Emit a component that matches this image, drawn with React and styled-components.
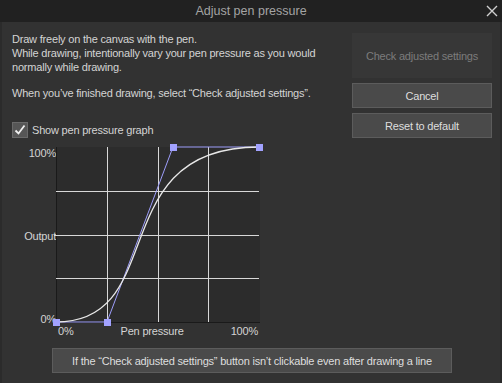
import React from 'react';
import styled, { createGlobalStyle } from 'styled-components';

const GlobalStyle = createGlobalStyle`
  html, body {
    margin: 0;
    padding: 0;
    background: #2b2b2b;
  }
  body {
    font-family: 'Liberation Sans', Arial, sans-serif;
    font-size: 11px;
    letter-spacing: -0.2px;
  }
`;

const Window = styled.div`
  width: 502px;
  height: 383px;
  display: flex;
  flex-direction: column;
  background: #2b2b2b;
  overflow: hidden;
`;

const TitleBar = styled.div`
  height: 22px;
  flex: none;
  display: flex;
  align-items: center;
  justify-content: center;
  position: relative;
  background: #212121;
  color: #a4a4a4;
  font-size: 12.5px;
  letter-spacing: 0;
`;

const CloseButton = styled.div`
  position: absolute;
  right: 4px;
  top: 5px;
  width: 12px;
  height: 12px;
`;

const Body = styled.div`
  flex: 1;
  margin: 0 2px;
  background: #323232;
  padding: 10px 8px 0 10px;
  display: flex;
  flex-direction: column;
`;

const Columns = styled.div`
  display: grid;
  grid-template-columns: 1fr 140px;
  column-gap: 10px;
`;

const Left = styled.div`
  display: flex;
  flex-direction: column;
`;

const Para = styled.p`
  margin: ${p => p.$top || 0}px 0 0;
  color: #d4d4d4;
  line-height: 14px;
`;

const CheckRow = styled.label`
  display: flex;
  align-items: center;
  gap: 4px;
  margin-top: 22px;
  color: #d4d4d4;
`;

const Box = styled.span`
  width: 16px;
  height: 16px;
  box-sizing: border-box;
  background: #565656;
  border: 1px solid #6a6a6a;
  display: flex;
  align-items: center;
  justify-content: center;
`;

const Graph = styled.div`
  margin-top: 9px;
  display: grid;
  grid-template-columns: 44px 203px;
  grid-template-rows: 176px 14px;
`;

const YLabels = styled.div`
  display: flex;
  flex-direction: column;
  justify-content: space-between;
  align-items: flex-end;
  color: #d4d4d4;
  line-height: 12px;
  margin-bottom: -2px;
`;

const XLabels = styled.div`
  grid-column: 2;
  display: flex;
  justify-content: space-between;
  color: #d4d4d4;
  line-height: 12px;
  padding: 2px 1px 0 2px;
`;

const Plot = styled.svg`
  display: block;
  overflow: visible;
`;

const RightCol = styled.div`
  display: flex;
  flex-direction: column;
  gap: 5px;
  padding-top: 1px;
`;

const Button = styled.div`
  box-sizing: border-box;
  height: ${p => p.$tall ? 45 : 25}px;
  display: flex;
  align-items: center;
  justify-content: center;
  white-space: nowrap;
  background: ${p => p.$disabled ? '#373737' : '#4a4a4a'};
  border: 1px solid ${p => p.$disabled ? '#373737' : '#5c5c5c'};
  color: ${p => p.$disabled ? '#7c7c7c' : '#dedede'};
`;

const Footer = styled.div`
  display: flex;
  justify-content: center;
  margin-top: 11px;
`;

const WideButton = styled(Button)`
  width: 400px;
`;

// plot coords: width 203, height 175
const W = 203;
const H = 175;
const pts = [[0, H], [51, H], [117, 0], [W, 0]];

export default function App() {
  const grid = [];
  for (let i = 1; i < 4; i++) {
    const x = Math.round((W * i) / 4) + 0.5;
    const y = Math.round((H * i) / 4) + 0.5;
    grid.push(<line key={'v' + i} x1={x} y1={0} x2={x} y2={H} stroke="#d8d8d8" strokeWidth="1" />);
    grid.push(<line key={'h' + i} x1={i === 2 ? -2 : 0} y1={y} x2={W} y2={y} stroke="#d8d8d8" strokeWidth="1" />);
  }
  return (
    <Window>
      <GlobalStyle />
      <TitleBar>
        Adjust pen pressure
        <CloseButton>
          <svg width="12" height="12" viewBox="0 0 12 12">
            <path d="M1 1 L11 11 M11 1 L1 11" stroke="#cfcfcf" strokeWidth="1.4" />
          </svg>
        </CloseButton>
      </TitleBar>
      <Body>
        <Columns>
          <Left>
            <Para>Draw freely on the canvas with the pen.</Para>
            <Para>While drawing, intentionally vary your pen pressure as you would normally while drawing.</Para>
            <Para $top={12}>When you’ve finished drawing, select “Check adjusted settings”.</Para>
            <CheckRow>
              <Box>
                <svg width="12" height="12" viewBox="0 0 12 12">
                  <path d="M1.5 6.5 L4.5 9.5 L10.5 1.5" fill="none" stroke="#f0f0f0" strokeWidth="1.8" />
                </svg>
              </Box>
              Show pen pressure graph
            </CheckRow>
            <Graph>
              <YLabels>
                <span>100%</span>
                <span>Output</span>
                <span>0%</span>
              </YLabels>
              <Plot width={W + 1} height={H + 1} viewBox={`0 0 ${W + 1} ${H + 1}`}>
                <rect x="0" y="0" width={W + 1} height={H + 1} fill="#2c2c2c" />
                <line x1="0.5" y1="0" x2="0.5" y2={H + 1} stroke="#1a1a1a" />
                <line x1="0" y1={H + 0.5} x2={W + 1} y2={H + 0.5} stroke="#1a1a1a" />
                {grid}
                <polyline
                  points={pts.map(p => p.join(',')).join(' ')}
                  fill="none"
                  stroke="#9d9dfa"
                  strokeWidth="1"
                />
                <path
                  d={`M0 ${H} C 114.5 ${H}, 46.5 0, ${W} 0`}
                  fill="none"
                  stroke="#e8e8e8"
                  strokeWidth="1.3"
                />
                {pts.map((p, i) => (
                  <rect key={i} x={p[0] - 3} y={p[1] - 3} width="7" height="7" fill="#a2a2ff" />
                ))}
              </Plot>
              <XLabels>
                <span>0%</span>
                <span>Pen pressure</span>
                <span>100%</span>
              </XLabels>
            </Graph>
          </Left>
          <RightCol>
            <Button $tall $disabled>Check adjusted settings</Button>
            <Button>Cancel</Button>
            <Button>Reset to default</Button>
          </RightCol>
        </Columns>
        <Footer>
          <WideButton>If the “Check adjusted settings” button isn’t clickable even after drawing a line</WideButton>
        </Footer>
      </Body>
    </Window>
  );
}
